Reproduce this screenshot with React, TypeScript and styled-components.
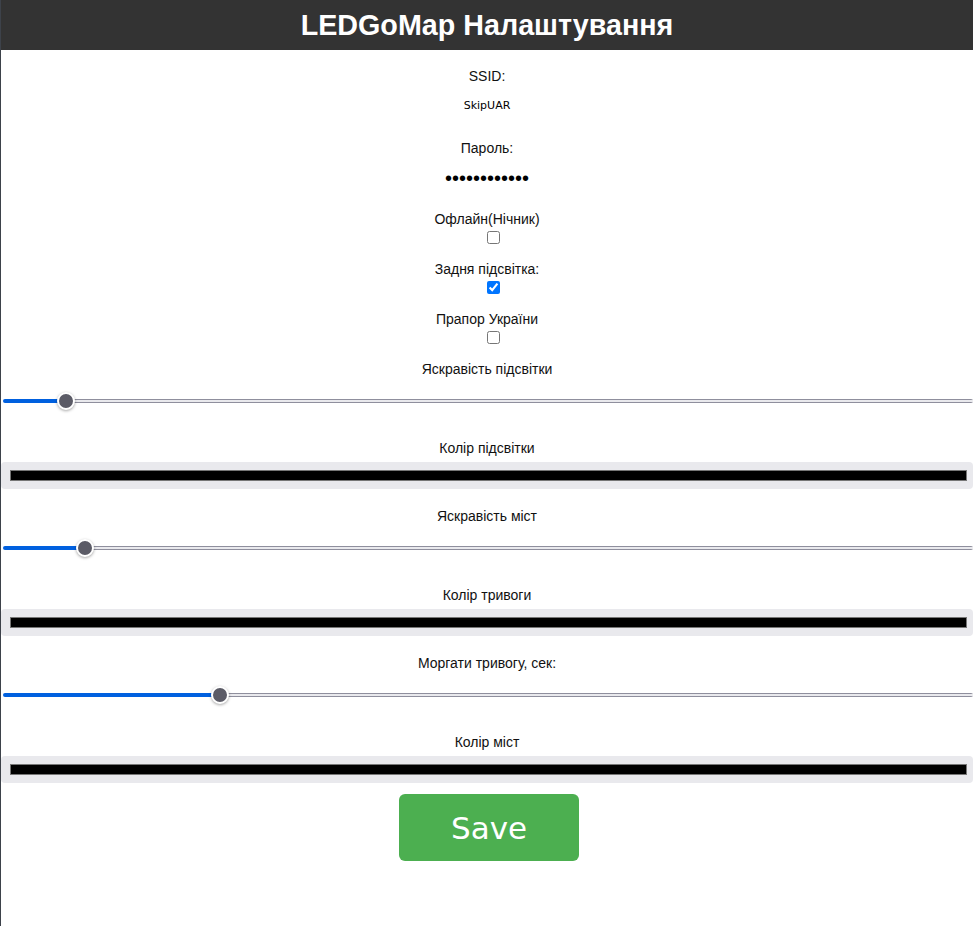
import React from 'react';
import styled, { createGlobalStyle } from 'styled-components';

const GlobalStyle = createGlobalStyle`
  html, body {
    margin: 0;
    padding: 0;
    background: #fff;
  }
  body {
    font-family: 'Liberation Sans', Arial, sans-serif;
    overflow-x: hidden;
  }
`;

const Page = styled.div`
  min-height: 926px;
  box-sizing: border-box;
  border-left: 1px solid #3d424a;
`;

const Header = styled.h1`
  margin: 0;
  height: 50px;
  background: #333333;
  color: #fff;
  font-size: 28.7px;
  font-weight: bold;
  line-height: 50px;
  text-align: center;
`;

const Form = styled.form`
  display: flex;
  flex-direction: column;
  align-items: center;
  padding-top: 18px;
`;

const Label = styled.label`
  display: block;
  font-size: 14px;
  line-height: 16px;
  color: #111;
  text-align: center;
`;

const ValueInput = styled.input<{ $secret?: boolean }>`
  width: 220px;
  height: 20px;
  margin: ${(p) => (p.$secret ? '12px 0 23px' : '11px 0 25px')};
  padding: 0;
  border: none;
  outline: none;
  background: transparent;
  font-family: ${(p) =>
    p.$secret ? "'Liberation Sans', Arial, sans-serif" : "'DejaVu Sans', Tahoma, sans-serif"};
  font-size: ${(p) => (p.$secret ? '20px' : '11px')};
  color: #000;
  text-align: center;
`;

const Check = styled.input.attrs({ type: 'checkbox' })`
  width: 13px;
  height: 13px;
  margin: 4px 0 17px 12px;
`;

const Slider = styled.input.attrs({ type: 'range' })<{ $fill: number }>`
  -webkit-appearance: none;
  appearance: none;
  align-self: stretch;
  height: 20px;
  margin: 14px 0 29px 2px;
  background: transparent;

  &::-webkit-slider-runnable-track {
    height: 4px;
    background:
      linear-gradient(#0060df, #0060df) left / ${(p) => p.$fill}% 100% no-repeat,
      linear-gradient(#8f8f9d 0 1px, #e9e9ed 1px 3px, #8f8f9d 3px);
    border-radius: 2px;
  }

  &::-webkit-slider-thumb {
    -webkit-appearance: none;
    box-sizing: border-box;
    width: 18px;
    height: 18px;
    margin-top: -7px;
    border-radius: 50%;
    background: #5b5b66;
    border: 2px solid #fff;
    box-shadow: 0 1px 3px rgba(0, 0, 0, 0.35);
  }
`;

const ColorInput = styled.input.attrs({ type: 'color' })`
  -webkit-appearance: none;
  appearance: none;
  display: block;
  align-self: stretch;
  width: 100%;
  box-sizing: border-box;
  height: 27px;
  margin: 6px 0 19px;
  padding: 8px 6px 8px 9px;
  border: none;
  border-radius: 4px;
  background: #e9e9ed;

  &::-webkit-color-swatch-wrapper {
    padding: 0;
  }
  &::-webkit-color-swatch {
    border: 1px solid #777;
    border-radius: 0;
  }
`;

const SaveButton = styled.button`
  width: 180px;
  height: 67px;
  margin: -8px 0 0 4px;
  border: none;
  border-radius: 6px;
  background: #4caf50;
  color: #fff;
  font-family: 'DejaVu Sans', Tahoma, sans-serif;
  font-size: 31px;
  cursor: pointer;
`;

// thumb centre as share of travel, read off the reference
const sliderPos = (v: number, max: number) => (v / max) * 100;

const SliderField: React.FC<{ label: string; value: number; max: number }> = ({
  label,
  value,
  max,
}) => (
  <>
    <Label>{label}</Label>
    <Slider min={0} max={max} step={0.1} defaultValue={value} $fill={sliderPos(value, max)} />
  </>
);

const ColorField: React.FC<{ label: string }> = ({ label }) => (
  <>
    <Label>{label}</Label>
    <ColorInput defaultValue="#000000" />
  </>
);

const CheckField: React.FC<{ label: string; checked?: boolean }> = ({ label, checked }) => (
  <>
    <Label>{label}</Label>
    <Check defaultChecked={checked} />
  </>
);

const App: React.FC = () => (
  <Page>
    <GlobalStyle />
    <Header>LEDGoMap Налаштування</Header>
    <Form onSubmit={(e) => e.preventDefault()}>
      <Label>SSID:</Label>
      <ValueInput type="text" defaultValue="SkipUAR" />
      <Label>Пароль:</Label>
      <ValueInput type="password" defaultValue="123456789012" $secret />
      <CheckField label="Офлайн(Нічник)" />
      <CheckField label="Задня підсвітка:" checked />
      <CheckField label="Прапор України" />
      <SliderField label="Яскравість підсвітки" value={5.7} max={100} />
      <ColorField label="Колір підсвітки" />
      <SliderField label="Яскравість міст" value={7.7} max={100} />
      <ColorField label="Колір тривоги" />
      <SliderField label="Моргати тривогу, сек:" value={21.8} max={100} />
      <ColorField label="Колір міст" />
      <SaveButton type="submit">Save</SaveButton>
    </Form>
  </Page>
);

export default App;
